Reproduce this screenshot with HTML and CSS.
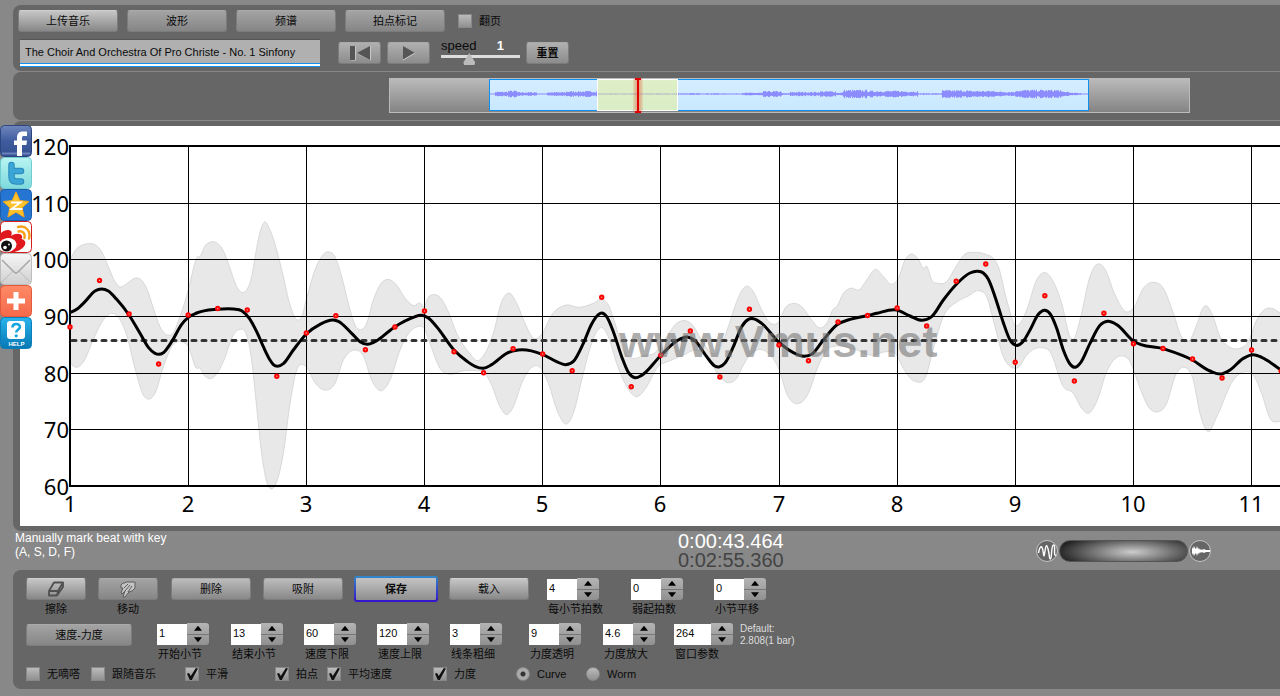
FILE: index.html
```html
<!DOCTYPE html>
<html lang="zh-CN">
<head>
<meta charset="utf-8">
<title>Vmus.net</title>
<link rel="stylesheet" href="styles.css">
</head>
<body>
<nav class="share" aria-label="Share">
  <a href="#facebook" aria-label="Facebook"><svg viewBox="0 0 32 32"><defs><linearGradient id="fb" x2="0" y2="1"><stop offset="0" stop-color="#6f87bd"/><stop offset=".5" stop-color="#3f5c9e"/><stop offset="1" stop-color="#34508f"/></linearGradient></defs><rect x=".5" y=".5" width="31" height="31" rx="4" fill="url(#fb)" stroke="#2d4580"/><path d="M2 28.500h28" stroke="#6a83ba" stroke-width="2"/><path d="M17 31V20h-3v-4.500h3V13c0-4.500 2-6.500 6-6.500h4V11h-3c-1.500 0-2 .6-2 2v2.500h5l-.6 4.500H22v11z" fill="#fff"/></svg></a>
  <a href="#twitter" aria-label="Twitter"><svg viewBox="0 0 32 32"><defs><linearGradient id="tw" x2="0" y2="1"><stop offset="0" stop-color="#b8f4f2"/><stop offset="1" stop-color="#7ed9dc"/></linearGradient></defs><rect x=".5" y=".5" width="31" height="31" rx="4" fill="url(#tw)" stroke="#6fcdd0"/><path d="M11.500 8v11.500q0 5 5 5h4.500M12 14h9" fill="none" stroke="#2a8abb" stroke-width="6.500" stroke-linecap="round"/><path d="M11.500 8v11.500q0 5 5 5h4.500M12 14h9" fill="none" stroke="#3aa5d6" stroke-width="4.500" stroke-linecap="round"/></svg></a>
  <a href="#qzone" aria-label="QZone"><svg viewBox="0 0 32 32"><rect x=".5" y=".5" width="31" height="31" rx="4" fill="#2576d2" stroke="#1b5dab"/><path d="M16 3l3.800 8.500 9.200 1-6.900 6.200 2 9.300-8.100-4.800L7.900 28l2-9.300L3 12.500l9.200-1z" fill="#fdc32d" stroke="#f3a51c"/><path d="M11 13.500h9.500l-9 6.500h11" fill="none" stroke="#fff" stroke-width="1.800"/></svg></a>
  <a href="#weibo" aria-label="Weibo"><svg viewBox="0 0 32 32"><rect x=".5" y=".5" width="31" height="31" rx="4" fill="#fff" stroke="#d21d1d"/><path d="M1 12c3-3 8-4 10-2 1 2 1 3 0 5 4-3 10-3 11 0 .5 1 0 2-.5 3 5 1 5 6 1 9-2 2-5 3-8 4H2L1 29z" fill="#e0181e"/><ellipse cx="7.500" cy="24" rx="9" ry="7" fill="#fff" transform="rotate(-12 8 24)"/><circle cx="6.500" cy="25" r="5.500" fill="#111"/><circle cx="5" cy="26.500" r="1.800" fill="#fff"/><circle cx="9" cy="23.500" r=".9" fill="#fff"/><path d="M18.500 10.500c4-1 7 2 6 6.500M18 6c8-2 13 4 11 11.500" fill="none" stroke="#f6a11c" stroke-width="2.400" stroke-linecap="round"/></svg></a>
  <a href="#mail" aria-label="Mail"><svg viewBox="0 0 32 32"><defs><linearGradient id="ml" x2="0" y2="1"><stop offset="0" stop-color="#f6f6f6"/><stop offset="1" stop-color="#cfcfcf"/></linearGradient></defs><rect x=".5" y=".5" width="31" height="31" rx="4" fill="url(#ml)" stroke="#bdbdbd"/><path d="M2 29l11-11M30 29L19 18" stroke="#bbb" fill="none"/><path d="M2 7l12 12q2 2 4 0L30 7" stroke="#a6a6a6" stroke-width="1.500" fill="none"/></svg></a>
  <a href="#more" aria-label="More"><svg viewBox="0 0 32 32"><defs><linearGradient id="pl" x2="0" y2="1"><stop offset="0" stop-color="#ff8a66"/><stop offset="1" stop-color="#f4694a"/></linearGradient></defs><rect x=".5" y=".5" width="31" height="31" rx="4" fill="url(#pl)" stroke="#e2593c"/><path d="M16 7v18M7 16h18" stroke="#fff" stroke-width="5"/></svg></a>
  <a href="#help" aria-label="Help"><svg viewBox="0 0 32 32"><defs><linearGradient id="hp" x2="0" y2="1"><stop offset="0" stop-color="#29b4ec"/><stop offset="1" stop-color="#0578b4"/></linearGradient></defs><rect x=".5" y=".5" width="31" height="31" rx="4" fill="url(#hp)" stroke="#0a7fb9"/><rect x="7" y="4" width="18" height="18" rx="3" fill="#fff"/><path d="M12.500 10.500c0-4.500 7.500-4.500 7.500-.5 0 2.500-3.800 2.500-3.800 5.500" fill="none" stroke="#14a5de" stroke-width="2.600"/><circle cx="16.200" cy="18.800" r="1.600" fill="#14a5de"/><text x="16.500" y="29" class="help-text">HELP</text></svg></a>
</nav>

<header class="panel top">
  <div class="row">
    <button class="btn wide lit">上传音乐</button>
    <button class="btn wide">波形</button>
    <button class="btn wide">频谱</button>
    <button class="btn wide">拍点标记</button>
    <label class="check flip"><input type="checkbox">翻页</label>
  </div>
  <div class="row second">
    <input class="song" type="text" aria-label="Song title" value="The Choir And Orchestra Of Pro Christe - No. 1 Sinfony">
    <button class="btn small" aria-label="Back to start"><svg width="24" height="16" viewBox="0 0 24 16"><path d="M7.500 1v14H3M22.500 1v14L9 8" stroke="#c8c8c8" fill="none"/><path d="M2 1h5v14H2zM22 1v14L9 8z" fill="#555"/></svg></button>
    <button class="btn small" aria-label="Play"><svg width="14" height="16" viewBox="0 0 14 16"><path d="M1 1l12 7-12 7z" fill="#555"/><path d="M13 8L1 15" stroke="#ccc"/></svg></button>
    <div class="speed">
      <label for="speed">speed</label><output for="speed">1</output>
      <input id="speed" type="range" min="0" max="3" step="0.1" value="1">
    </div>
    <button class="btn small bold">重置</button>
  </div>
</header>

<section class="panel overview">
  <div class="strip">
    <svg id="wave" width="600" height="32" aria-label="Waveform"></svg>
    <span class="window"></span>
    <span class="cursor"></span>
  </div>
</section>

<main class="panel chart">
  <svg id="chart" aria-label="Tempo curve"></svg>
</main>

<section class="status">
  <p class="hint">Manually mark beat with key<br>(A, S, D, F)</p>
  <p class="time"><span>0:00:43.464</span><span class="total">0:02:55.360</span></p>
  <div class="tone">
    <svg width="24" height="24" viewBox="0 0 24 24"><circle cx="12" cy="12" r="10.500" fill="#666" stroke="#c4c4c4"/><path d="M3.500 14C5 6 7 6 8 12s1 7 2 0 2-7 3.500 0 .5 8 2 8 .5-14 3-14-.5 12 2.500 10" fill="none" stroke="#fff" stroke-width="1.400"/></svg>
    <input type="range" aria-label="Tone">
    <svg width="24" height="24" viewBox="0 0 24 24"><circle cx="12" cy="12" r="10.500" fill="#666" stroke="#c4c4c4"/><path d="M4 8l1 2 1-3 1 2 1 1 1-3 1 3 1-1 1 2 1-1 1 1 2-1 2 1h4v2h-4l-2 1-2-1-1 1-1-1-1 2-1-1-1 3-1-3-1 1-1 2-1-3-1 2z" fill="#fff"/></svg>
  </div>
</section>

<section class="panel tools">
  <div class="grid one">
    <div class="tool"><button class="btn lit" id="erase" aria-label="擦除"><svg width="18" height="16" viewBox="0 0 18 16"><path d="M2 10L7 1.500h9L11 10zM2 10v4.500h8L16 6V1.500M11 10l-1 4.500" fill="none" stroke="#505050" stroke-width="1.800" stroke-linejoin="round"/></svg></button><span>擦除</span></div>
    <div class="tool"><button class="btn" id="move" aria-label="移动"><svg width="20" height="18" viewBox="0 0 20 18"><path d="M3 5l2-2 2 0 1-1 3 0 6 0v6l-3 3-3 1-4 5-2 0 2-6-3 3-1-1 2-5-2 0zM6 8l4-4M7 11l5-6M10 12l4-6" fill="#c4c4c4" stroke="#5c5c5c" stroke-linejoin="round"/></svg></button><span>移动</span></div>
    <button class="btn mid">删除</button>
    <button class="btn mid">吸附</button>
    <button class="btn save">保存</button>
    <button class="btn mid lit">载入</button>
    <div class="field"><span class="stepper"><input id="n1" value="4"><span class="arrows"><button aria-label="增加"></button><button aria-label="减少"></button></span></span><label for="n1">每小节拍数</label></div>
    <div class="field"><span class="stepper"><input id="n2" value="0"><span class="arrows"><button aria-label="增加"></button><button aria-label="减少"></button></span></span><label for="n2">弱起拍数</label></div>
    <div class="field"><span class="stepper"><input id="n3" value="0"><span class="arrows"><button aria-label="增加"></button><button aria-label="减少"></button></span></span><label for="n3">小节平移</label></div>
  </div>
  <div class="grid two">
    <button class="btn mode">速度-力度</button>
    <div class="field"><span class="stepper"><input id="m1" value="1"><span class="arrows"><button aria-label="增加"></button><button aria-label="减少"></button></span></span><label for="m1">开始小节</label></div>
    <div class="field"><span class="stepper"><input id="m2" value="13"><span class="arrows"><button aria-label="增加"></button><button aria-label="减少"></button></span></span><label for="m2">结束小节</label></div>
    <div class="field"><span class="stepper"><input id="m3" value="60"><span class="arrows"><button aria-label="增加"></button><button aria-label="减少"></button></span></span><label for="m3">速度下限</label></div>
    <div class="field"><span class="stepper"><input id="m4" value="120"><span class="arrows"><button aria-label="增加"></button><button aria-label="减少"></button></span></span><label for="m4">速度上限</label></div>
    <div class="field"><span class="stepper"><input id="m5" value="3"><span class="arrows"><button aria-label="增加"></button><button aria-label="减少"></button></span></span><label for="m5">线条粗细</label></div>
    <div class="field"><span class="stepper"><input id="m6" value="9"><span class="arrows"><button aria-label="增加"></button><button aria-label="减少"></button></span></span><label for="m6">力度透明</label></div>
    <div class="field"><span class="stepper"><input id="m7" value="4.6"><span class="arrows"><button aria-label="增加"></button><button aria-label="减少"></button></span></span><label for="m7">力度放大</label></div>
    <div class="field"><span class="stepper big"><input id="m8" value="264"><span class="arrows"><button aria-label="增加"></button><button aria-label="减少"></button></span></span><label for="m8">窗口参数</label></div>
    <p class="default">Default:<br>2.808(1 bar)</p>
  </div>
  <div class="grid three">
    <label class="check"><input type="checkbox">无嘀嗒</label>
    <label class="check"><input type="checkbox">跟随音乐</label>
    <label class="check"><input type="checkbox" checked>平滑</label>
    <label class="check"><input type="checkbox" checked>拍点</label>
    <label class="check"><input type="checkbox" checked>平均速度</label>
    <label class="check"><input type="checkbox" checked>力度</label>
    <label class="check"><input type="radio" name="view" checked>Curve</label>
    <label class="check"><input type="radio" name="view">Worm</label>
  </div>
</section>
<script src="chart.js"></script>
</body>
</html>
```
FILE: styles.css
```css
* { box-sizing: border-box; }
body {
  margin: 0;
  padding: 5px 0 7px 13px;
  background: #888;
  font: 11px/16px "Liberation Sans", "Noto Sans CJK SC", sans-serif;
  color: #0a0a0a;
  overflow-x: hidden;
}
p { margin: 0; }
button, input { font: inherit; color: inherit; }
.panel { background: #666; border-radius: 8px 0 0 8px; }

.share {
  position: absolute;
  left: 0;
  top: 125px;
  display: flex;
  flex-direction: column;
  width: 32px;
}
.share a, .share svg { display: block; width: 32px; height: 32px; }
.help-text { font: bold 6px "Liberation Sans", sans-serif; fill: #fff; text-anchor: middle; }

.btn {
  display: flex;
  align-items: center;
  justify-content: center;
  height: 22px;
  padding: 0;
  border: 1px solid #7c7c7c;
  border-top-color: #aaa;
  border-radius: 3px;
  background: linear-gradient(#a4a4a4, #868686);
}
.btn.lit { background: linear-gradient(#c6c6c6, #888); border-top-color: #d0d0d0; }
.wide { width: 100px; }
.small { width: 43px; background: linear-gradient(#b0b0b0, #8c8c8c); }
.mid { width: 80px; background: linear-gradient(#bcbcbc, #888); }
.bold { font-weight: bold; }

.top { padding: 5px 5px 4px; }
.row { display: flex; gap: 9px; }
.second { margin-top: 7px; align-items: center; gap: 6px; }
.check { display: flex; align-items: center; gap: 7px; white-space: nowrap; }
.flip { margin-left: 4px; }
.check input {
  appearance: none;
  flex: none;
  width: 14px;
  height: 14px;
  margin: 0;
  border: 1px solid #888;
  background: linear-gradient(#bbb, #909090);
}
.check input[type="radio"] { border-radius: 50%; }
.check input[type="radio"]:checked { background: radial-gradient(circle, #333 2px, #aaa 3px); }
.check input[type="checkbox"]:checked::before {
  content: "";
  display: block;
  width: 12px;
  height: 12px;
  background: #111;
  clip-path: polygon(8% 48%, 25% 42%, 40% 66%, 82% 0, 100% 4%, 48% 100%, 32% 100%);
}
.song {
  width: 300px;
  height: 28px;
  margin: 0 12px 0 2px;
  padding: 0 5px 4px;
  border: 0;
  border-top: 1px solid #555;
  background: linear-gradient(#b0b0b0 23px, #1292f0 23px, #1292f0 24px, #fff 24px, #fff 26px, #1292f0 26px);
}
.speed {
  display: grid;
  grid-template-columns: 1fr auto;
  width: 79px;
  margin: 0 0 2px 5px;
  font-size: 13px;
  line-height: 14px;
}
.speed output { padding-right: 16px; color: #fff; font-weight: bold; }
.speed input {
  grid-column: 1 / 3;
  appearance: none;
  width: 100%;
  height: 12px;
  margin: 0;
  background: linear-gradient(transparent 2px, #ddd 2px, #ddd 5px, transparent 5px);
}
.speed input::-webkit-slider-thumb {
  appearance: none;
  width: 12px;
  height: 12px;
  background: #bbb;
  clip-path: polygon(50% 0, 100% 80%, 92% 100%, 8% 100%, 0 80%);
}

.overview { margin-top: 1px; padding: 6px 0 7px 376px; }
.strip {
  position: relative;
  width: 801px;
  height: 35px;
  border: 1px solid #bbb;
  padding-left: 99px;
  background: linear-gradient(#bababa, #848484);
}
.strip svg {
  display: block;
  border: 1px solid #0e90f0;
  background: linear-gradient(#d6edff, #c8e8ff);
}
.window {
  position: absolute;
  left: 207px;
  top: 0;
  width: 81px;
  height: 32px;
  border: 1px solid #fff;
  background: #e4f0a099;
}
.cursor {
  position: absolute;
  left: 243px;
  top: -1px;
  width: 10px;
  height: 35px;
  background:
    linear-gradient(#e00000, #e00000) center / 2px 100% no-repeat,
    linear-gradient(#e00000, #e00000) top / 6px 2px no-repeat,
    linear-gradient(#e00000, #e00000) bottom / 6px 2px no-repeat,
    linear-gradient(90deg, #e0604022, #e0604099, #e0604022);
}

.chart { margin-top: 1px; padding: 5px 0 5px 7px; }
.chart svg { display: block; width: 100%; height: 400px; background: #fff; }
.grid-line { stroke: #000; }
.frame { stroke: #000; stroke-width: 2; }
.axis { font: 22px "Noto Sans", sans-serif; }
.band { fill: #e8e8e8; stroke: #d8d8d8; }
.mean { stroke: #333; stroke-width: 3; stroke-dasharray: 4 6; stroke-linecap: round; }
.curve { fill: none; stroke: #000; stroke-width: 3; }
.mark { fill: #daa; stroke: #f00; stroke-width: 2; }
.water {
  font: bold 45px "Liberation Sans", sans-serif;
  fill: #777;
  opacity: .6;
}

.status {
  display: grid;
  grid-template-columns: 665px 357px auto;
  height: 39px;
  color: #fff;
}
.hint { padding-left: 2px; font-size: 12px; line-height: 14px; }
.time { padding-top: 1px; font-size: 20px; line-height: 19px; }
.time span { display: block; }
.total { color: #444; }
.tone { display: flex; align-items: center; }
.tone input {
  appearance: none;
  width: 129px;
  height: 22px;
  margin: 0;
  border-radius: 11px;
  border: 1px solid #555;
  background: radial-gradient(ellipse 76px 18px at 57% 55%, #ccc, #222);
}
.tone input::-webkit-slider-thumb { appearance: none; width: 1px; }

.tools { padding: 8px 0 7px 13px; }
.grid { display: grid; align-items: start; }
.one { grid-template-columns: 72px 73px 92px 91px 95px 98px 84px 83px auto; }
.two { grid-template-columns: 131px 74px 73px 73px 73px 79px 74px 71px 66px auto; margin-top: 6px; }
.three { grid-template-columns: 65px 94px 90px 52px 106px 83px 70px auto; margin-top: 4px; }
.tool { width: 60px; text-align: center; }
.tool .btn { width: 60px; }
.tool span { display: block; margin-top: 1px; }
.save {
  width: 84px;
  height: 26px;
  margin-top: -2px;
  border: 2px solid transparent;
  background: linear-gradient(#c4c4c4, #8e8e8e) padding-box, linear-gradient(#38c, #31c) border-box;
  font-weight: bold;
}
.mode { width: 106px; margin-top: 1px; }
.stepper { display: flex; width: 52px; height: 22px; }
.big { width: 59px; }
.stepper input {
  flex: 1;
  min-width: 0;
  height: 21px;
  margin-top: 1px;
  padding: 0 0 4px 2px;
  border: 0;
  background: #fff;
}
.arrows {
  display: grid;
  width: 22px;
  border-radius: 0 3px 3px 0;
  background: linear-gradient(#b4b4b4, #909090);
}
.arrows button { padding: 0; border: 0; background: none; display: grid; place-items: center; }
.arrows button + button { border-top: 1px solid #777; }
.arrows button::before { content: ""; width: 8px; height: 5px; background: #000; clip-path: polygon(50% 0, 100% 100%, 0 100%); }
.arrows button + button::before { clip-path: polygon(0 0, 100% 0, 50% 100%); }
.field label { display: block; margin: 1px 0 0 1px; white-space: nowrap; }
.default { font-size: 10px; line-height: 12px; color: #ddd; }
```
FILE: chart.js
```js
const NS = "http://www.w3.org/2000/svg";
const add = (parent, tag, attrs, text) => {
  const el = document.createElementNS(NS, tag);
  for (const k in attrs) el.setAttribute(k, attrs[k]);
  if (text !== undefined) el.textContent = text;
  return parent.appendChild(el);
};

// Each section: origin x, origin y, then x y pairs at three units per pixel.
const read = sections => sections.flatMap(([ox, oy, data]) => {
  const n = data.trim().split(/\s+/).map(Number), out = [];
  for (let i = 0; i < n.length; i += 2) out.push([ox + n[i] / 3, oy + n[i + 1] / 3]);
  return out;
});

const curve = read([
  [60, 210, "30 308 50 298 75 275 105 243 125 237 145 243 170 268 207 315 240 370 265 412 285 430 296 433 310 428 335 395 365 343 385 322 410 309 470 298 520 297 545 302 568 325 590 365 610 410 630 450 640 464 653 469 670 461 700 420 739 372 780 343 820 330 835 334 875 370 900 395 922 403 945 395 1005 350 1060 322 1085 316 1105 324 1130 350 1182 420 1220 453"],
  [470, 240, "15 379 40 385 65 374 110 340 145 330 217 343 260 365 287 374 312 362 340 310 365 252 385 224 395 219 410 230 430 275 455 350 475 397 495 413 515 406 571 348 620 303 652 291 675 302 710 350 733 377 747 381 765 369 790 320 815 260 835 238 850 236 875 250 925 305 970 338 1003 349 1025 343 1060 300 1100 255 1140 238 1192 227"],
  [860, 240, "50 220 110 210 150 228 187 241 215 230 250 180 290 132 330 99 352 94 370 99 385 118 405 170 430 248 450 300 468 316 488 306 510 270 535 223 555 211 572 224 590 265 610 330 630 372 645 382 662 368 690 310 720 256 743 244 770 254 820 303 909 326 997 360 1050 393 1085 402 1110 390 1150 355 1180 344 1205 352 1262 389"]
]);
const upper = read([
  [60, 210, "30 150 45 122 65 106 85 101 105 104 125 125 145 170 165 215 180 231 200 221 228 204 245 211 262 240 280 295 300 350 322 375 340 368 360 320 385 240 398 185 410 143 420 140 435 108 453 96 472 100 490 122 510 175 530 230 545 247 560 240 575 200 590 115 602 60 614 36 628 55 650 120 670 200 690 285 712 330 725 320 740 265 765 180 785 139 808 126 825 140 845 200 870 300 885 345 902 359 918 345 940 270 960 225 982 208 1005 220 1040 270 1062 287 1080 279 1093 290 1105 262 1120 254 1140 262 1165 305 1190 370 1225 425"],
  [470, 240, "25 362 45 340 70 280 95 185 117 159 140 190 165 250 190 295 217 280 245 225 285 196 330 202 370 190 395 178 415 195 435 250 460 330 485 354 520 347 555 338 590 290 620 250 645 242 665 252 695 300 725 340 745 335 775 260 800 185 820 145 835 139 850 155 875 210 900 248 928 243 945 205 965 191 995 200 1025 240 1050 264 1070 250 1090 207 1100 200 1120 160 1140 145 1170 148 1190 120 1217 88 1240 110"],
  [860, 240, "95 133 115 115 135 60 155 42 175 58 190 85 200 79 215 120 235 130 260 125 285 85 315 42 340 37 380 44 400 55 415 80 440 180 465 255 480 250 500 210 530 120 557 98 580 125 605 190 630 290 642 297 660 240 690 110 705 78 718 72 735 88 765 165 800 216 820 205 850 145 883 127 910 145 940 220 965 292 990 300 1010 255 1030 202 1040 198 1055 220 1080 290 1110 322 1140 325 1165 305 1190 240 1215 208 1235 205 1262 220"]
]);
const lower = read([
  [60, 210, "30 460 50 472 70 456 100 388 130 330 155 310 175 322 200 375 225 475 250 555 268 567 285 550 310 470 335 410 365 395 385 410 410 475 420 474 430 492 450 506 470 492 490 455 520 375 540 358 560 375 575 450 590 590 605 730 620 815 635 837 650 815 670 730 690 580 710 480 727 463 742 475 765 518 795 540 825 520 850 450 870 425 885 420 910 437 935 510 965 542 990 510 1020 420 1050 365 1072 350 1093 356 1110 400 1140 475 1170 493 1200 484"],
  [470, 240, "20 392 40 395 65 435 90 500 110 524 130 500 155 430 185 382 210 382 235 430 265 520 290 552 310 520 335 420 360 325 380 275 397 263 415 290 440 370 465 430 500 470 530 440 560 385 600 362 640 345 680 330 710 345 745 405 775 428 800 415 820 375 840 345 870 328 900 345 928 390 950 460 985 491 1015 460 1040 390 1070 330 1100 318 1160 330 1205 346"],
  [860, 240, "80 335 110 345 130 385 165 424 200 402 215 345 250 230 290 186 325 168 357 152 380 170 405 260 430 350 455 382 475 382 500 345 545 323 570 335 610 440 640 460 665 505 685 520 710 485 740 395 780 348 810 365 835 430 865 500 890 516 920 490 945 410 980 385 1000 420 1020 520 1045 575 1070 530 1120 420 1155 395 1180 405 1205 460 1230 535 1262 545"]
]);
const beats = [327, 280.5, 314, 364, 315, 308.5, 310, 376.3, 333, 315.7, 349.7, 327, 311, 351.7, 372.7, 348.7, 354, 370.7, 297.3, 386.7, 355.3, 331, 377, 309.3, 345, 360.7, 322, 315.5, 308, 326, 281.3, 264, 362.3, 295.7, 381, 313.3, 343.7, 348.5, 359, 378, 350, 371];

// Smooth curve through the points: cubic segments whose end slopes are
// the neighbouring slopes, weighted by the distance between the points.
function spline(p) {
  const slope = (a, b) => (b[1] - a[1]) / (b[0] - a[0]);
  const m = p.map((b, i) => {
    const a = p[i - 1], c = p[i + 1];
    if (!a) return slope(b, c);
    if (!c) return slope(a, b);
    const h0 = b[0] - a[0], h1 = c[0] - b[0];
    return (h1 * slope(a, b) + h0 * slope(b, c)) / (h0 + h1);
  });
  let d = "";
  for (let i = 0; i < p.length - 1; i++) {
    const b = p[i], c = p[i + 1], h = (c[0] - b[0]) / 3;
    d += `C${b[0] + h} ${b[1] + h * m[i]} ${c[0] - h} ${c[1] - h * m[i + 1]} ${c[0]} ${c[1]}`;
  }
  return d;
}

const g = add(document.getElementById("chart"), "g", { transform: "translate(-20 -126)" });
const back = [...lower].reverse();
add(g, "path", { class: "band", d: `M${upper[0]}${spline(upper)}L${back[0]}${spline(back)}Z` });
[146, 203, 259, 316, 373, 429, 486].forEach((y, i) => {
  const edge = i === 0 || i === 6;
  add(g, "line", { class: edge ? "frame" : "grid-line", x1: 70, x2: 4000, y1: edge ? y : y + .5, y2: edge ? y : y + .5 });
  add(g, "text", { class: "axis", x: 69, y: y + 9, "text-anchor": "end" }, 120 - i * 10);
});
[70, 188, 306, 424, 542, 660, 779, 897, 1015, 1133, 1251].forEach((x, i) => {
  add(g, "line", { class: i ? "grid-line" : "frame", x1: i ? x + .5 : x, x2: i ? x + .5 : x, y1: 145, y2: 487 });
  add(g, "text", { class: "axis", x, y: 512, "text-anchor": "middle" }, i + 1);
});
add(g, "line", { class: "mean", x1: 72, x2: 4000, y1: 340.5, y2: 340.5 });
add(g, "path", { class: "curve", d: `M${curve[0]}${spline(curve)}` });
beats.forEach((y, i) => add(g, "circle", { class: "mark", cx: 70 + i * 29.54, cy: y, r: 1.7 }));
add(g, "text", { class: "water", x: 619, y: 357 }, "www.Vmus.net");

// Loudness envelope: start offset and peak height.
const levels = [[0, .5], [5, 2.5], [18, 3.5], [27, 2], [47, .5], [57, 2], [76, 3], [108, 1], [190, .9], [232, .7], [252, 1.4], [273, 3], [292, .9], [300, 2.3], [330, 3], [346, 1.5], [353, 4.3], [378, 3.4], [412, 3], [428, .9], [452, 4], [478, 3.4], [508, 2.6], [526, 4.4], [571, 2.6], [580, 1.3], [591, .5]];
let bars = "", seed = 7, k = 0;
for (let x = 0; x < 598; x++) {
  if (levels[k + 1] && x >= levels[k + 1][0]) k++;
  seed = (seed * 16807) % 2147483647;
  const h = Math.max(.5, levels[k][1] * (.5 + .5 * seed / 2147483647));
  bars += `M${x + .5} ${14 - h}v${2 * h}`;
}
add(document.getElementById("wave"), "path", { d: bars, stroke: "#8c8cff" });
```
